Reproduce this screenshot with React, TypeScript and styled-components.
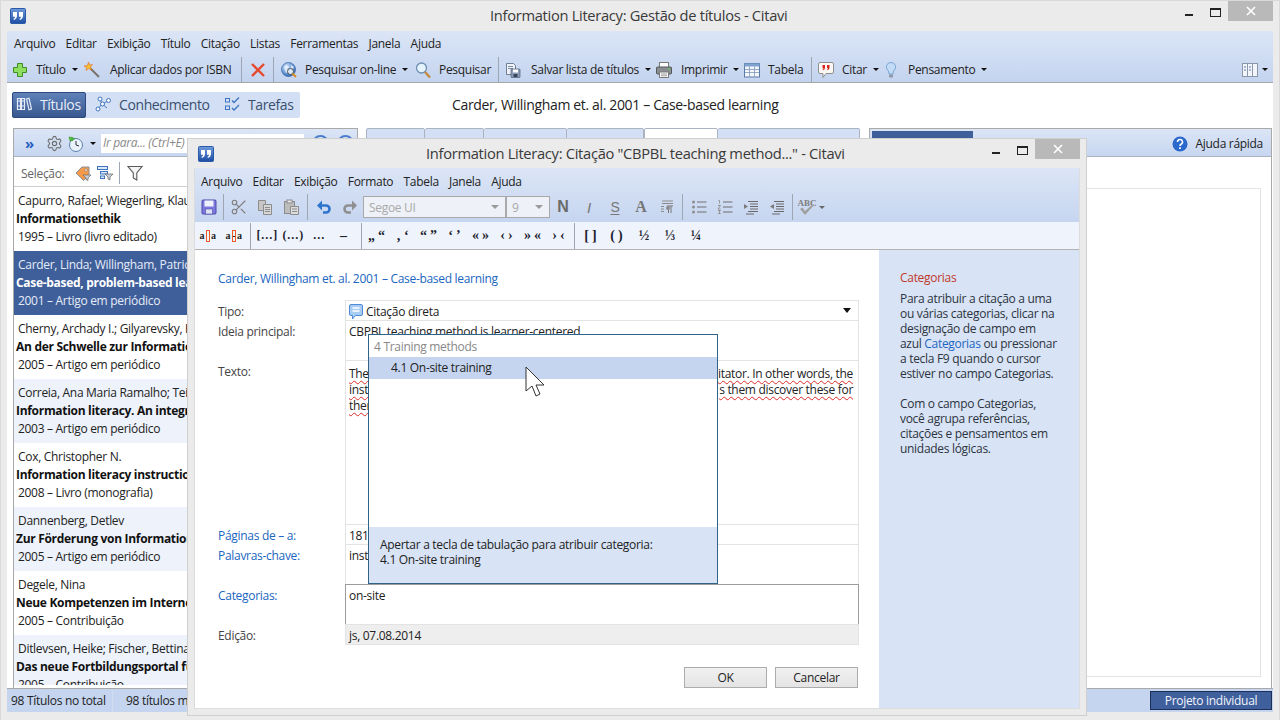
import React from 'react';
import styled, { createGlobalStyle } from 'styled-components';
import { Scissors, Settings } from 'lucide-react';

const UI_FONT = '"Open Sans", "Noto Sans", "Liberation Sans", sans-serif';
const SERIF = '"Liberation Serif", "DejaVu Serif", serif';

const Global = createGlobalStyle`
  html, body { margin: 0; padding: 0; width: 1280px; height: 720px; overflow: hidden; background: #ebebeb; }
  #root { width: 1280px; height: 720px; }
  * { box-sizing: border-box; }
  body { font-family: ${UI_FONT}; font-size: 12px; letter-spacing: -0.3px; color: #222; }
`;

/* window chrome */

const Win = styled.div`
  position: relative;
  width: 1280px;
  height: 720px;
  display: flex;
  flex-direction: column;
  background: #ebebeb;
  border: 1px solid #d9d9d9;
  border-bottom: 0;
`;

const TitleBar = styled.div<{ $h: number }>`
  flex: none;
  height: ${(p) => p.$h}px;
  display: flex;
  align-items: flex-start;
  position: relative;
`;

const TitleText = styled.div<{ $left: number; $top: number }>`
  margin-left: ${(p) => p.$left}px;
  margin-top: ${(p) => p.$top}px;
  font-size: 14.7px;
  line-height: 22px;
  color: #3a3a3a;
  white-space: nowrap;
`;

const LogoSlot = styled.div<{ $left: number; $top: number }>`
  flex: none;
  width: 16px;
  height: 16px;
  margin-left: ${(p) => p.$left}px;
  margin-top: ${(p) => p.$top}px;
`;

const Controls = styled.div<{ $right: number }>`
  position: absolute;
  top: 0;
  right: ${(p) => p.$right}px;
  display: flex;
  align-items: flex-start;
`;

const MinBtn = styled.div`
  width: 8px;
  height: 2px;
  margin-top: 13px;
  background: #222;
`;

const MaxBtn = styled.div`
  width: 11px;
  height: 9px;
  margin: 7px 7px 0 17px;
  border: 1px solid #222;
  border-top-width: 2px;
`;

const CloseBtn = styled.div`
  width: 45px;
  height: 20px;
  margin-left: 0;
  background: #b9b9b9;
  color: #fff;
  display: flex;
  align-items: center;
  justify-content: center;
`;

/* toolbars */

const Frame = styled.div`
  flex: none;
  height: 681px;
  margin: 0 6px 0 6px;
  display: flex;
  flex-direction: column;
`;

const BarGroup = styled.div`
  flex: none;
  height: 52px;
  background: linear-gradient(#dbe5f6, #c4d4ef);
  border-bottom: 1px solid #a8a8a8;
`;

const MenuBar = styled.div<{ $pad: number; $gap: number; $top?: number }>`
  height: 24px;
  display: flex;
  align-items: center;
  gap: ${(p) => p.$gap}px;
  padding-left: ${(p) => p.$pad}px;
  padding-top: ${(p) => p.$top ?? 0}px;
  color: #222;
`;

const ToolRow = styled.div`
  height: 27px;
  display: flex;
  align-items: center;
  padding: 2px 0 0 5px;
`;

const Tool = styled.div<{ $w: number; $offset: number }>`
  flex: none;
  width: ${(p) => p.$w}px;
  display: flex;
  align-items: center;
  white-space: nowrap;
  & > svg { flex: none; margin-right: ${(p) => p.$offset - 16}px; }
`;

const Caret = styled.span<{ $gray?: boolean }>`
  flex: none;
  width: 0;
  height: 0;
  margin-left: 6px;
  border-left: 3px solid transparent;
  border-right: 3px solid transparent;
  border-top: 3px solid ${(p) => (p.$gray ? '#666' : '#111')};
`;

const SpellCaret = styled(Caret)`
  margin-left: -1px;
`;

const Sep = styled.div<{ $l?: number; $r?: number; $h?: number }>`
  flex: none;
  width: 1px;
  height: ${(p) => p.$h ?? 26}px;
  margin-left: ${(p) => p.$l ?? 0}px;
  margin-right: ${(p) => p.$r ?? 7}px;
  background: #9ea6b3;
`;

const ToolEnd = styled.div`
  margin-left: auto;
  margin-right: 5px;
  display: flex;
  align-items: center;
  & > span { margin-left: 4px; }
`;

/* main window body */

const Body = styled.div`
  flex: 1;
  min-height: 0;
  background: #fff;
  display: flex;
  flex-direction: column;
`;

const NavRow = styled.div`
  flex: none;
  height: 26px;
  margin: 9px 0 10px 5px;
  display: flex;
  align-items: center;
`;

const NavStrip = styled.div`
  width: 288px;
  height: 26px;
  background: #d2dff4;
  border-radius: 2px;
  display: flex;
  align-items: stretch;
`;

const NavItem = styled.div<{ $w: number; $active?: boolean }>`
  flex: none;
  width: ${(p) => p.$w}px;
  display: flex;
  align-items: center;
  gap: 8px;
  padding: 0 0 2px ${(p) => (p.$active ? 3 : 9)}px;
  font-size: 14px;
  letter-spacing: -0.4px;
  color: ${(p) => (p.$active ? '#e8eefa' : '#39506f')};
  border-radius: 2px;
  ${(p) => p.$active && 'background: linear-gradient(#5e81ba, #39588f); border: 1px solid #2c4a7e;'}
`;

const Caption = styled.div`
  margin: -2px 0 0 152px;
  font-size: 14px;
  letter-spacing: -0.35px;
  color: #222;
`;

const Panels = styled.div`
  flex: 1;
  min-height: 0;
  display: flex;
  padding-left: 6px;
`;

const LeftPanel = styled.div`
  flex: none;
  width: 345px;
  display: flex;
  flex-direction: column;
  border: 1px solid #a9a9a9;
  border-bottom: 0;
  padding-bottom: 3px;
  overflow: hidden;
`;

const PanelHead = styled.div`
  flex: none;
  height: 28px;
  padding-top: 2px;
  background: linear-gradient(#dbe5f6, #c7d6f0);
  border-bottom: 1px solid #a9b3c2;
  display: flex;
  align-items: center;
`;

const Chevron = styled.span`
  margin-left: 11px;
  width: 21px;
  font-size: 15px;
  line-height: 15px;
  color: #1f5fc0;
  font-weight: 700;
`;

const HeadGap = styled.span<{ $w: number }>`
  flex: none;
  width: ${(p) => p.$w}px;
`;

const GoInput = styled.div`
  width: 203px;
  height: 19px;
  margin-left: 5px;
  padding-left: 2px;
  line-height: 18px;
  background: #fff;
  font-style: italic;
  color: #8a8a8a;
`;

const RoundBtn = styled.div`
  width: 17px;
  height: 17px;
  margin-left: 8px;
  border: 2px solid #4a7ccc;
  border-radius: 50%;
  background: #eaf1fb;
`;

const SelectRow = styled.div`
  flex: none;
  height: 30px;
  display: flex;
  align-items: center;
  padding: 3px 0 0 7px;
  border-bottom: 1px solid #cfcfcf;
  color: #666;
  & > svg { flex: none; }
`;

const TitleList = styled.div`
  flex: 1;
  min-height: 0;
  overflow: hidden;
`;

const Row = styled.div<{ $tone: 'plain' | 'alt' | 'selected' }>`
  height: 64px;
  padding: 5px 0 0 2px;
  line-height: 18px;
  white-space: nowrap;
  overflow: hidden;
  background: ${(p) => (p.$tone === 'selected' ? '#3f5f9b' : p.$tone === 'alt' ? '#edf2fb' : '#fff')};
  color: ${(p) => (p.$tone === 'selected' ? '#e6ecf7' : '#222')};
  & > b { display: block; color: ${(p) => (p.$tone === 'selected' ? '#fff' : '#111')}; }
  & > span { display: block; padding-left: 2px; }
`;

const MidPanel = styled.div`
  flex: none;
  width: 494px;
  margin-left: 8px;
  display: flex;
  align-items: flex-start;
`;

const TabTop = styled.div<{ $w: number; $active?: boolean }>`
  flex: none;
  width: ${(p) => p.$w}px;
  height: 29px;
  border: 1px solid #a9b3c2;
  border-left-width: ${(p) => (p.$active ? 1 : 0)}px;
  border-radius: 2px 2px 0 0;
  background: ${(p) => (p.$active ? '#fff' : '#d2dff4')};
  &:first-child { border-left-width: 1px; }
`;

const RightPanel = styled.div`
  flex: none;
  width: 403px;
  margin-left: 9px;
  display: flex;
  flex-direction: column;
  border: 1px solid #a9a9a9;
  border-bottom: 0;
`;

const RightHead = styled(PanelHead)`
  position: relative;
  justify-content: flex-end;
  padding-right: 8px;
  gap: 8px;
`;

const BlueTab = styled.div`
  position: absolute;
  left: 2px;
  top: 2px;
  width: 101px;
  height: 24px;
  background: #3f5f9b;
`;

const InnerBox = styled.div`
  flex: 1;
  margin: 31px 10px 11px 10px;
  border: 1px solid #e4e4e4;
`;

const StatusBar = styled.div`
  flex: none;
  height: 24px;
  background: #c5d5f0;
  border-top: 1px solid #a9a9a9;
  display: flex;
  align-items: center;
  padding-left: 4px;
  white-space: nowrap;
`;

const StatusCell = styled.div<{ $w: number }>`
  flex: none;
  width: ${(p) => p.$w}px;
  height: 22px;
  line-height: 22px;
  margin-right: 13px;
  border-right: 1px solid #d2ddf1;
`;

const ProjectBtn = styled.div`
  flex: none;
  width: 122px;
  height: 19px;
  margin-left: auto;
  margin-right: 1px;
  background: #3f5f9d;
  border: 1px solid #1d2f57;
  color: #f2f5fb;
  line-height: 17px;
  text-align: center;
`;

/* dialog */

const Dialog = styled.div`
  position: absolute;
  left: 186px;
  top: 137px;
  width: 900px;
  height: 578px;
  background: #ebebeb;
  border: 1px solid #cfcfcf;
  display: flex;
  flex-direction: column;
`;

const DialogInner = styled.div`
  flex: 1;
  min-height: 0;
  margin: 0 6px 6px 6px;
  display: flex;
  flex-direction: column;
  border: 1px solid #dcdcdc;
  border-top: 0;
`;

const DialogBars = styled.div`
  flex: none;
  height: 54px;
  background: linear-gradient(#dbe5f6, #c6d5f0);
`;

const DialogTools = styled.div`
  height: 30px;
  display: flex;
  align-items: center;
  padding-left: 1px;
`;

const Cell = styled.div`
  flex: none;
  width: 26px;
  height: 24px;
  display: flex;
  align-items: center;
  justify-content: center;
`;

const SpellCell = styled(Cell)`
  flex-direction: column;
  & > svg { margin-top: -5px; }
`;

const SpellText = styled.span`
  font: 700 9px ${SERIF};
  letter-spacing: 0;
  line-height: 9px;
  color: #7d7d7d;
`;

const FontBox = styled.div<{ $w: number }>`
  flex: none;
  width: ${(p) => p.$w}px;
  height: 22px;
  display: flex;
  align-items: center;
  justify-content: space-between;
  padding: 0 6px 0 5px;
  background: #eef1f7;
  border: 1px solid #a9a9a9;
  color: #aaa;
`;

const FontCaret = styled.span`
  width: 0;
  height: 0;
  border-left: 4px solid transparent;
  border-right: 4px solid transparent;
  border-top: 4px solid #9a9a9a;
`;

const GlyphN = styled.span`
  font: 700 16px "Liberation Sans", sans-serif;
  color: #6b6b6b;
`;

const GlyphI = styled.span`
  font: italic 400 15px "Liberation Sans", sans-serif;
  color: #777;
`;

const GlyphS = styled.span`
  font: 400 14px "Liberation Sans", sans-serif;
  color: #777;
  text-decoration: underline;
  text-underline-offset: 2px;
`;

const GlyphA = styled.span`
  font: 700 16px ${SERIF};
  color: #777;
`;

const CharBar = styled.div`
  flex: none;
  height: 28px;
  background: #eff4fc;
  border-bottom: 1px solid #b3b3b3;
  display: flex;
  align-items: center;
`;

const CharCell = styled(Cell)`
  height: 26px;
  font: 700 12px ${SERIF};
  letter-spacing: 0.4px;
  color: #1c1c2e;
`;

const QuoteCell = styled(CharCell)`
  font-size: 14px;
  letter-spacing: 3px;
`;

const FractionCell = styled(CharCell)`
  font-size: 14px;
  letter-spacing: 0;
`;

const BreakGlyph = styled.span`
  display: inline-flex;
  align-items: center;
  font: 700 10px ${SERIF};
  color: #222;
`;

const BreakBox = styled.span<{ $dash?: boolean }>`
  display: inline-block;
  width: 4px;
  height: 12px;
  margin: 0 1px;
  border: 1px solid #ee5a24;
  background: ${(p) => (p.$dash ? 'linear-gradient(transparent 45%, #222 45%, #222 60%, transparent 60%)' : 'transparent')};
`;

const DialogMain = styled.div`
  flex: 1;
  min-height: 0;
  display: flex;
  background: #fff;
`;

const FormArea = styled.div`
  position: relative;
  flex: none;
  width: 684px;
  padding: 19px 0 0 23px;
`;

const QuoteLink = styled.div`
  height: 20px;
  line-height: 20px;
  margin-bottom: 12px;
  color: #1a66c0;
  white-space: nowrap;
`;

const FormGrid = styled.div`
  display: grid;
  grid-template-columns: 127px 514px;
  grid-template-rows: 20px 40px 164px 20px 40px 40px 20px;
`;

const FieldLabel = styled.div<{ $link?: boolean }>`
  padding-top: 1px;
  line-height: 19px;
  color: ${(p) => (p.$link ? '#1a66c0' : '#444')};
`;

const Field = styled.div<{ $dark?: boolean; $filled?: boolean }>`
  position: relative;
  display: flex;
  align-items: flex-start;
  border: 1px solid ${(p) => (p.$dark ? '#9c9c9c' : '#e3e3e3')};
  margin-top: -1px;
  padding: 1px 3px 0;
  line-height: 19px;
  white-space: nowrap;
  overflow: hidden;
  background: ${(p) => (p.$filled ? '#eeeeee' : '#fff')};
  color: #222;
`;

const TypeIcon = styled.span`
  display: inline-flex;
  margin-right: 3px;
  margin-top: 2px;
`;

const TypeArrow = styled.span`
  position: absolute;
  right: 7px;
  top: 7px;
  width: 0;
  height: 0;
  border-left: 4px solid transparent;
  border-right: 4px solid transparent;
  border-top: 5px solid #111;
`;

const QuoteText = styled.div`
  width: 100%;
  padding-top: 4px;
`;

const QuoteLine = styled.div`
  display: flex;
  justify-content: space-between;
  height: 16px;
  line-height: 16px;
  padding-right: 2px;
  & > span {
    text-decoration: underline wavy #d92c2c 1px;
    text-underline-offset: 2px;
  }
`;

const Popup = styled.div`
  position: absolute;
  left: 173px;
  top: 84px;
  width: 350px;
  height: 250px;
  background: #fff;
  border: 1px solid #2f6488;
  display: flex;
  flex-direction: column;
`;

const PopupHead = styled.div`
  flex: none;
  height: 22px;
  line-height: 24px;
  padding-left: 5px;
  color: #888;
`;

const PopupRow = styled.div`
  flex: none;
  height: 22px;
  line-height: 22px;
  padding-left: 22px;
  background: #c5d5f0;
`;

const PopupHint = styled.div`
  flex: none;
  height: 56px;
  margin-top: auto;
  padding: 10px 0 0 11px;
  line-height: 15px;
  background: #d8e3f5;
  white-space: nowrap;
`;

const Pointer = styled.svg`
  position: absolute;
  left: 330px;
  top: 116px;
`;

const FormButtons = styled.div`
  display: flex;
  justify-content: flex-end;
  gap: 8px;
  margin-top: 22px;
  padding-right: 1px;
  width: 641px;
`;

const PushButton = styled.div`
  width: 83px;
  height: 21px;
  line-height: 19px;
  text-align: center;
  background: linear-gradient(#f1f1f1, #e4e4e4);
  border: 1px solid #acacac;
  color: #222;
`;

const HelpSide = styled.div`
  flex: 1;
  padding: 20px 0 0 21px;
  background: #d8e3f5;
  line-height: 15px;
  white-space: nowrap;
  color: #2c3440;
`;

const HelpTitle = styled.div`
  margin-bottom: 6px;
  color: #c0392b;
`;

const HelpLink = styled.span`
  color: #1a66c0;
`;

const HelpPara = styled.p`
  margin: 0 0 15px;
`;

/* icons */

const Ico = ({ children, s = 16 }: { children: React.ReactNode; s?: number }) => (
  <svg width={s} height={s} viewBox="0 0 16 16" fill="none">
    {children}
  </svg>
);

const Logo = () => (
  <Ico>
    <defs>
      <linearGradient id="lg" x1="0" y1="0" x2="0" y2="1">
        <stop offset="0" stopColor="#6f9bdb" />
        <stop offset="1" stopColor="#1c4da3" />
      </linearGradient>
    </defs>
    <rect x="0.5" y="0.5" width="15" height="15" rx="1" fill="url(#lg)" stroke="#2b5aa8" />
    <path d="M3 4h4v3.500c0 2-1 3.600-3 4.500l-.6-1c1-.6 1.600-1.300 1.700-2.200H3zM9 4h4v3.500c0 2-1 3.600-3 4.500l-.6-1c1-.6 1.600-1.300 1.700-2.200H9z" fill="#fff" />
  </Ico>
);

const PlusIcon = () => (
  <Ico>
    <path d="M5.500 1.500h5v4h4v5h-4v4h-5v-4h-4v-5h4z" fill="#8ede62" stroke="#3d8f22" />
  </Ico>
);

const WandIcon = () => (
  <Ico>
    <path d="M6 6l9 9" stroke="#77736b" strokeWidth="2" />
    <path d="M4.500 0l1 3 3-.5-2 2.500 1 3-3-1.500-2.500 2 .5-3L0 4l3.500-.5z" fill="#f6c22f" stroke="#e0692a" strokeWidth=".6" />
  </Ico>
);

const RedX = () => (
  <Ico>
    <path d="M2 2l12 12M14 2L2 14" stroke="#e6492d" strokeWidth="2.400" />
  </Ico>
);

const GlobeIcon = () => (
  <Ico>
    <defs>
      <radialGradient id="gb" cx=".35" cy=".3" r=".8">
        <stop offset="0" stopColor="#cfe4fb" />
        <stop offset="1" stopColor="#1f5fb5" />
      </radialGradient>
    </defs>
    <circle cx="7.500" cy="7.500" r="7" fill="url(#gb)" stroke="#2f5f9f" strokeWidth=".7" />
    <path d="M3 5l3-2 2 2-2 2 1 3-2 1zM10 3l3 2-1 2-2-1z" fill="#e6f1fc" opacity=".85" />
    <circle cx="9.500" cy="9.500" r="3" fill="#dbeafa" stroke="#555" />
    <path d="M11.500 11.500L15 15" stroke="#d98b20" strokeWidth="2" />
  </Ico>
);

const LensIcon = () => (
  <Ico>
    <circle cx="6.500" cy="6" r="5" fill="#e5f3fd" stroke="#6d90b3" strokeWidth="1.300" />
    <path d="M10 10l5 5.500" stroke="#c58a3e" strokeWidth="2.400" />
  </Ico>
);

const SaveListIcon = () => (
  <Ico>
    <path d="M1.500 1.500h7l2 2v9h-9z" fill="#eef2f8" stroke="#6d7f96" />
    <path d="M3 4.500h5M3 6.500h5" stroke="#7e8ea3" />
    <rect x="6" y="7" width="9" height="8.500" rx=".6" fill="#8d9cb5" stroke="#4f5f7a" strokeWidth=".7" />
    <rect x="8" y="7.500" width="5" height="3" fill="#fff" />
    <rect x="8.500" y="12" width="4" height="3" fill="#39465e" />
  </Ico>
);

const PrinterIcon = () => (
  <Ico>
    <rect x="3.500" y="0.500" width="9" height="5" fill="#fff" stroke="#7a7a7a" />
    <rect x="0.500" y="5" width="15" height="7" rx="1" fill="#8a8d92" stroke="#55585c" />
    <rect x="12" y="6.500" width="2" height="1.200" fill="#63d34a" />
    <rect x="3.500" y="10" width="9" height="5.500" fill="#fff" stroke="#7a7a7a" />
    <path d="M5 12h6M5 13.800h6" stroke="#9a9a9a" />
  </Ico>
);

const TableIcon = () => (
  <Ico>
    <rect x="0.500" y="1.500" width="15" height="13.500" fill="#f3f7fc" stroke="#5a7ba5" />
    <rect x="0.500" y="1.500" width="15" height="3" fill="#7fa2cf" />
    <path d="M5.500 4.500v10M10.500 4.500v10M1 7.500h14M1 10.500h14" stroke="#7f98b8" strokeWidth=".8" />
  </Ico>
);

const CiteIcon = () => (
  <Ico>
    <path d="M2 .5h12a1.500 1.500 0 0 1 1.500 1.500v8a1.500 1.500 0 0 1-1.500 1.500H8l-3 4v-4H2A1.500 1.500 0 0 1 .5 10V2A1.500 1.500 0 0 1 2 .5z" fill="#fbf7f4" stroke="#8f8f8f" />
    <path d="M4.500 3h2.500v2.500c0 1.300-.7 2.200-2 2.800l-.4-.8c.6-.4 1-.8 1-1.300H4.500zM9 3h2.500v2.500c0 1.300-.7 2.200-2 2.800l-.4-.8c.6-.4 1-.8 1-1.300H9z" fill="#d8261c" />
  </Ico>
);

const BulbIcon = () => (
  <Ico>
    <path d="M5 .5a4.500 4.500 0 0 1 3 8c-.7.700-1 2-1 3.500H3c0-1.500-.3-2.800-1-3.500a4.500 4.500 0 0 1 3-8z" fill="#c2dcf7" stroke="#7aa5d6" />
    <rect x="3" y="12.500" width="4" height="3" rx=".8" fill="#8d98a8" />
  </Ico>
);

const ColumnsIcon = () => (
  <Ico>
    <rect x="0.500" y="1.500" width="15" height="13" fill="#f2f5fa" stroke="#8b97a8" />
    <path d="M5.500 2v12M10.500 2v12" stroke="#8b97a8" />
    <path d="M2 5h2M2 8h2M7 5h2M7 8h2" stroke="#5b7cab" />
  </Ico>
);

const BooksIcon = () => (
  <Ico>
    <path d="M1.500 2.500h3v11h-3zM5.500 2.500h3v11h-3z" fill="none" stroke="#e6edf9" strokeWidth="1.200" />
    <path d="M10.500 3l2.500-.8L15.500 13l-2.500.8z" fill="none" stroke="#e6edf9" strokeWidth="1.200" />
    <path d="M2 5h2M6 5h2M2 10h2M6 10h2" stroke="#e6edf9" />
  </Ico>
);

const NodesIcon = () => (
  <Ico>
    <path d="M3 13L7 8l6-3M7 8L5 3M7 8l5 4" stroke="#4d7fc6" />
    <circle cx="3" cy="13" r="2" fill="#fff" stroke="#3f74c0" />
    <circle cx="7.500" cy="8" r="2" fill="#fff" stroke="#3f74c0" />
    <circle cx="5" cy="3" r="2" fill="#fff" stroke="#3f74c0" />
    <circle cx="13.500" cy="4.500" r="2" fill="#fff" stroke="#3f74c0" />
  </Ico>
);

const TasksIcon = () => (
  <Ico>
    <rect x="1.500" y="2.500" width="4" height="3.500" stroke="#3f74c0" />
    <rect x="1.500" y="10" width="4" height="3.500" stroke="#3f74c0" />
    <path d="M8 4.500l2 2 5-5M8 12l2 2 5-5" stroke="#3f74c0" strokeWidth="1.300" />
  </Ico>
);

const ClockIcon = () => (
  <Ico>
    <circle cx="8" cy="9" r="6.500" fill="#eaf2fb" stroke="#5d7fae" />
    <path d="M8 5v4l3 1" stroke="#334" />
    <path d="M1 1l4 .5-1 1.500c1-.5 2-.6 3-.6L4 5l-.6-1-1.200 1.500z" fill="#4fbf3d" stroke="#2b8b1d" strokeWidth=".5" />
  </Ico>
);

const TagIcon = () => (
  <Ico>
    <path d="M1 8l6-6h7v8l-5.500 5.500z" fill="#f59a4a" stroke="#8a8f98" />
    <circle cx="11" cy="5" r="1.200" fill="#fff" stroke="#777" strokeWidth=".6" />
    <path d="M8 10h8l-3 3v2.500l-2-1V13z" fill="#c9ced6" stroke="#666" strokeWidth=".7" />
  </Ico>
);

const ListFilterIcon = () => (
  <Ico>
    <rect x="0.500" y="1.500" width="10" height="3" fill="#dbe8f8" stroke="#3f74c0" />
    <rect x="3.500" y="6.500" width="7" height="2.500" fill="#dbe8f8" stroke="#3f74c0" />
    <rect x="3.500" y="11" width="4" height="2.500" fill="#dbe8f8" stroke="#3f74c0" />
    <path d="M8 9h8l-3 3v3l-2-1v-2z" fill="#c9ced6" stroke="#666" strokeWidth=".7" />
  </Ico>
);

const FunnelIcon = () => (
  <Ico>
    <path d="M1 1.500h14L9.800 8v7l-3.500-2V8z" fill="#f5f5f5" stroke="#5a5a5a" strokeWidth="1.100" />
  </Ico>
);

const HelpIcon = () => (
  <svg width="16" height="16" viewBox="0 0 16 16">
    <circle cx="8" cy="8" r="7.500" fill="#2a68cc" />
    <path d="M5.500 6a2.500 2.500 0 1 1 3.500 2.300c-.7.400-1 .8-1 1.700" stroke="#fff" strokeWidth="1.600" fill="none" />
    <rect x="7.100" y="11.200" width="1.800" height="1.800" fill="#fff" />
  </svg>
);

const CloseX = () => (
  <svg width="10" height="10" viewBox="0 0 10 10">
    <path d="M1 1l8 8M9 1L1 9" stroke="#fff" strokeWidth="1.600" />
  </svg>
);

const FloppyIcon = () => (
  <Ico>
    <rect x="1" y="1" width="14" height="14" rx="1" fill="#7d78de" stroke="#4a4aa8" />
    <rect x="3.500" y="1.500" width="9" height="6" fill="#eef1fb" />
    <rect x="4.500" y="10" width="7" height="5" fill="#dfe2f4" stroke="#4a4aa8" strokeWidth=".6" />
  </Ico>
);

const CopyIcon = () => (
  <Ico>
    <path d="M1.500 1.500h7v10h-7z" fill="#c6c6c6" stroke="#8c8c8c" />
    <path d="M6.500 5.500h8v10h-8z" fill="#d6d6d6" stroke="#8c8c8c" />
    <path d="M8 8.500h5M8 10.500h5M8 12.500h5" stroke="#8c8c8c" />
  </Ico>
);

const PasteIcon = () => (
  <Ico>
    <rect x="1.500" y="2.500" width="10" height="12" fill="#bdbdbd" stroke="#8c8c8c" />
    <rect x="4" y="1" width="5" height="3" fill="#e5e5e5" stroke="#8c8c8c" />
    <path d="M7.500 7.500h8v8h-8z" fill="#dcdcdc" stroke="#8c8c8c" />
    <path d="M9 10h5M9 12.500h5" stroke="#8c8c8c" />
  </Ico>
);

const UndoIcon = ({ color }: { color: string }) => (
  <Ico>
    <path d="M4.500 6.500H10a3.500 3.500 0 0 1 0 7H7" stroke={color} strokeWidth="2.600" />
    <path d="M6 1.500L1 6.500l5 5z" fill={color} />
  </Ico>
);

const RedoIcon = ({ color }: { color: string }) => (
  <Ico>
    <path d="M11.500 6.500H6a3.500 3.500 0 0 0 0 7h3" stroke={color} strokeWidth="2.600" />
    <path d="M10 1.500l5 5-5 5z" fill={color} />
  </Ico>
);

const ParaIcon = () => (
  <Ico>
    <path d="M3 2h11M3 4.500h11M2 7.500h3M2 10h3M2 12.500h3" stroke="#8c8c8c" />
    <path d="M8 7h6M9.500 7v7M12 7v7" stroke="#777" />
    <circle cx="9" cy="9" r="2" fill="#8c8c8c" />
  </Ico>
);

const BulletsIcon = () => (
  <Ico>
    <circle cx="2.500" cy="3" r="1.500" fill="#8d8d8d" />
    <circle cx="2.500" cy="8" r="1.500" fill="#8d8d8d" />
    <circle cx="2.500" cy="13" r="1.500" fill="#8d8d8d" />
    <path d="M6 3h9.500M6 8h9.500M6 13h9.500" stroke="#6f6f6f" />
  </Ico>
);

const NumbersIcon = () => (
  <Ico>
    <path d="M1.500 1.500h1v3M1 6.500h2.500L1 10h2.500M1 11.500h2.500l-1.500 1.500 1.500 1.500H1" stroke="#8d8d8d" strokeWidth=".9" />
    <path d="M6 3h9.500M6 8h9.500M6 13h9.500" stroke="#6f6f6f" />
  </Ico>
);

const IndentIcon = ({ back }: { back?: boolean }) => (
  <Ico>
    <path d="M5 2.500h10M7 5h8M7 7.500h8M7 10h8M5 12.500h10M3 15h8" stroke="#6a6a6a" />
    <path d={back ? 'M1 7.500L5 5v5z' : 'M5 7.500L1 5v5z'} fill="#7c7c7c" />
  </Ico>
);

const SpellCheck = () => (
  <svg width="16" height="12" viewBox="0 0 16 12">
    <path d="M1 6l2.500-1.500L6 8 14 1l1 1.200L6 12z" fill="#a0a0a0" />
  </svg>
);

const Bubble = () => (
  <svg width="14" height="16" viewBox="0 0 14 16">
    <path d="M2 .5h10A1.500 1.500 0 0 1 13.500 2v8a1.500 1.500 0 0 1-1.500 1.500H6.500L3.500 15v-3.500H2A1.500 1.500 0 0 1 .5 10V2A1.500 1.500 0 0 1 2 .5z" fill="#a9ccf4" stroke="#4d8ad8" />
    <path d="M3.500 4h7M3.500 7h7" stroke="#fff" strokeWidth="1.300" />
  </svg>
);

/* data */

const titles: { a: string; t: string; y: string; tone: 'plain' | 'alt' | 'selected' }[] = [
  { a: 'Capurro, Rafael; Wiegerling, Klaus', t: 'Informationsethik', y: '1995 – Livro (livro editado)', tone: 'plain' },
  { a: 'Carder, Linda; Willingham, Patricia', t: 'Case-based, problem-based learning', y: '2001 – Artigo em periódico', tone: 'selected' },
  { a: 'Cherny, Archady I.; Gilyarevsky, R.', t: 'An der Schwelle zur Informationsgesellschaft', y: '2005 – Artigo em periódico', tone: 'plain' },
  { a: 'Correia, Ana Maria Ramalho; Teixeira', t: 'Information literacy. An integrated concept', y: '2003 – Artigo em periódico', tone: 'alt' },
  { a: 'Cox, Christopher N.', t: 'Information literacy instruction', y: '2008 – Livro (monografia)', tone: 'plain' },
  { a: 'Dannenberg, Detlev', t: 'Zur Förderung von Informationskompetenz', y: '2005 – Artigo em periódico', tone: 'alt' },
  { a: 'Degele, Nina', t: 'Neue Kompetenzen im Internet', y: '2005 – Contribuição', tone: 'plain' },
  { a: 'Ditlevsen, Heike; Fischer, Bettina', t: 'Das neue Fortbildungsportal für', y: '2005 – Contribuição', tone: 'alt' },
];

const mainMenu = ['Arquivo', 'Editar', 'Exibição', 'Título', 'Citação', 'Listas', 'Ferramentas', 'Janela', 'Ajuda'];
const dialogMenu = ['Arquivo', 'Editar', 'Exibição', 'Formato', 'Tabela', 'Janela', 'Ajuda'];
const quoteGlyphs = ['„“', '‚‘', '“”', '‘’', '«»', '‹›', '»«', '›‹'];

export default function App() {
  return (
    <>
      <Global />
      <Win>
        <TitleBar $h={30}>
          <LogoSlot $left={9} $top={7}>
            <Logo />
          </LogoSlot>
          <TitleText $left={464} $top={3}>
            Information Literacy: Gestão de títulos - Citavi
          </TitleText>
          <Controls $right={6}>
            <MinBtn />
            <MaxBtn />
            <CloseBtn>
              <CloseX />
            </CloseBtn>
          </Controls>
        </TitleBar>

        <Frame>
          <BarGroup>
            <MenuBar $pad={7} $gap={10.25}>
              {mainMenu.map((m) => (
                <span key={m}>{m}</span>
              ))}
            </MenuBar>
            <ToolRow>
              <Tool $w={72} $offset={24}>
                <PlusIcon />
                Título
                <Caret />
              </Tool>
              <Tool $w={157} $offset={26}>
                <WandIcon />
                Aplicar dados por ISBN
              </Tool>
              <Sep $r={8} />
              <Tool $w={23} $offset={16}>
                <RedX />
              </Tool>
              <Sep />
              <Tool $w={134} $offset={24}>
                <GlobeIcon />
                Pesquisar on-line
                <Caret />
              </Tool>
              <Tool $w={83} $offset={24}>
                <LensIcon />
                Pesquisar
              </Tool>
              <Sep $r={6} />
              <Tool $w={151} $offset={26}>
                <SaveListIcon />
                Salvar lista de títulos
                <Caret />
              </Tool>
              <Tool $w={88} $offset={25}>
                <PrinterIcon />
                Imprimir
                <Caret />
              </Tool>
              <Tool $w={67} $offset={24}>
                <TableIcon />
                Tabela
              </Tool>
              <Sep $r={6} />
              <Tool $w={68} $offset={24}>
                <CiteIcon />
                Citar
                <Caret />
              </Tool>
              <Tool $w={110} $offset={22}>
                <BulbIcon />
                Pensamento
                <Caret />
              </Tool>
              <ToolEnd>
                <ColumnsIcon />
                <Caret />
              </ToolEnd>
            </ToolRow>
          </BarGroup>

          <Body>
            <NavRow>
              <NavStrip>
                <NavItem $w={74} $active>
                  <BooksIcon />
                  Títulos
                </NavItem>
                <NavItem $w={129}>
                  <NodesIcon />
                  Conhecimento
                </NavItem>
                <NavItem $w={85}>
                  <TasksIcon />
                  Tarefas
                </NavItem>
              </NavStrip>
              <Caption>Carder, Willingham et. al. 2001 – Case-based learning</Caption>
            </NavRow>

            <Panels>
              <LeftPanel>
                <PanelHead>
                  <Chevron>»</Chevron>
                  <Settings size={17} color="#6f6f6f" strokeWidth={1.6} />
                  <HeadGap $w={5} />
                  <ClockIcon />
                  <Caret />
                  <GoInput>Ir para... (Ctrl+E)</GoInput>
                  <RoundBtn />
                  <RoundBtn />
                </PanelHead>
                <SelectRow>
                  Seleção:
                  <HeadGap $w={11} />
                  <TagIcon />
                  <HeadGap $w={6} />
                  <ListFilterIcon />
                  <HeadGap $w={6} />
                  <Sep $r={7} $h={22} />
                  <FunnelIcon />
                </SelectRow>
                <TitleList>
                  {titles.map((r) => (
                    <Row key={r.a} $tone={r.tone}>
                      <span>{r.a}</span>
                      <b>{r.t}</b>
                      <span>{r.y}</span>
                    </Row>
                  ))}
                </TitleList>
              </LeftPanel>

              <MidPanel>
                <TabTop $w={59} />
                <TabTop $w={59} />
                <TabTop $w={83} />
                <TabTop $w={77} />
                <TabTop $w={74} $active />
                <TabTop $w={142} />
              </MidPanel>

              <RightPanel>
                <RightHead>
                  <BlueTab />
                  <HelpIcon />
                  Ajuda rápida
                </RightHead>
                <InnerBox />
              </RightPanel>
            </Panels>

            <StatusBar>
              <StatusCell $w={102}>98 Títulos no total</StatusCell>
              98 títulos mostrados
              <ProjectBtn>Projeto individual</ProjectBtn>
            </StatusBar>
          </Body>
        </Frame>

        <Dialog>
          <TitleBar $h={29}>
            <LogoSlot $left={10} $top={7}>
              <Logo />
            </LogoSlot>
            <TitleText $left={212} $top={3}>
              Information Literacy: Citação "CBPBL teaching method..." - Citavi
            </TitleText>
            <Controls $right={6}>
              <MinBtn />
              <MaxBtn />
              <CloseBtn>
                <CloseX />
              </CloseBtn>
            </Controls>
          </TitleBar>

          <DialogInner>
            <DialogBars>
              <MenuBar $pad={6} $gap={10.25} $top={2}>
                {dialogMenu.map((m) => (
                  <span key={m}>{m}</span>
                ))}
              </MenuBar>
              <DialogTools>
                <Cell>
                  <FloppyIcon />
                </Cell>
                <Sep $l={1} $r={2} />
                <Cell>
                  <Scissors size={18} color="#7d7d7d" strokeWidth={1.5} />
                </Cell>
                <Cell>
                  <CopyIcon />
                </Cell>
                <Cell>
                  <PasteIcon />
                </Cell>
                <Sep $l={3} $r={3} />
                <Cell>
                  <UndoIcon color="#2f74cc" />
                </Cell>
                <Cell>
                  <RedoIcon color="#8f8f8f" />
                </Cell>
                <FontBox $w={143}>
                  Segoe UI
                  <FontCaret />
                </FontBox>
                <FontBox $w={44}>
                  9
                  <FontCaret />
                </FontBox>
                <Cell>
                  <GlyphN>N</GlyphN>
                </Cell>
                <Cell>
                  <GlyphI>I</GlyphI>
                </Cell>
                <Cell>
                  <GlyphS>S</GlyphS>
                </Cell>
                <Cell>
                  <GlyphA>A</GlyphA>
                </Cell>
                <Cell>
                  <ParaIcon />
                </Cell>
                <Sep $l={2} $r={3} />
                <Cell>
                  <BulletsIcon />
                </Cell>
                <Cell>
                  <NumbersIcon />
                </Cell>
                <Cell>
                  <IndentIcon />
                </Cell>
                <Cell>
                  <IndentIcon back />
                </Cell>
                <Sep $l={2} $r={1} />
                <SpellCell>
                  <SpellText>ABC</SpellText>
                  <SpellCheck />
                </SpellCell>
                <SpellCaret $gray />
              </DialogTools>
            </DialogBars>

            <CharBar>
              <CharCell>
                <BreakGlyph>
                  a<BreakBox />a
                </BreakGlyph>
              </CharCell>
              <CharCell>
                <BreakGlyph>
                  a<BreakBox $dash />a
                </BreakGlyph>
              </CharCell>
              <Sep $l={3} $r={3} />
              <CharCell>[…]</CharCell>
              <CharCell>(…)</CharCell>
              <CharCell>…</CharCell>
              <QuoteCell>–</QuoteCell>
              <Sep $l={3} $r={3} />
              {quoteGlyphs.map((q) => (
                <QuoteCell key={q}>{q}</QuoteCell>
              ))}
              <Sep $l={1} $r={4} />
              <QuoteCell>[]</QuoteCell>
              <QuoteCell>()</QuoteCell>
              <FractionCell>½</FractionCell>
              <FractionCell>⅓</FractionCell>
              <FractionCell>¼</FractionCell>
            </CharBar>

            <DialogMain>
              <FormArea>
                <QuoteLink>Carder, Willingham et. al. 2001 – Case-based learning</QuoteLink>
                <FormGrid>
                  <FieldLabel>Tipo:</FieldLabel>
                  <Field>
                    <TypeIcon>
                      <Bubble />
                    </TypeIcon>
                    Citação direta
                    <TypeArrow />
                  </Field>
                  <FieldLabel>Ideia principal:</FieldLabel>
                  <Field>CBPBL teaching method is learner-centered</Field>
                  <FieldLabel>Texto:</FieldLabel>
                  <Field>
                    <QuoteText>
                      <QuoteLine>
                        <span>The</span>
                        <span>itator. In other words, the</span>
                      </QuoteLine>
                      <QuoteLine>
                        <span>inst</span>
                        <span>s them discover these for</span>
                      </QuoteLine>
                      <QuoteLine>
                        <span>them</span>
                      </QuoteLine>
                    </QuoteText>
                  </Field>
                  <FieldLabel $link>Páginas de – a:</FieldLabel>
                  <Field>181</Field>
                  <FieldLabel $link>Palavras-chave:</FieldLabel>
                  <Field>inst</Field>
                  <FieldLabel $link>Categorias:</FieldLabel>
                  <Field $dark>on-site</Field>
                  <FieldLabel>Edição:</FieldLabel>
                  <Field $filled>js, 07.08.2014</Field>
                </FormGrid>
                <FormButtons>
                  <PushButton>OK</PushButton>
                  <PushButton>Cancelar</PushButton>
                </FormButtons>

                <Popup>
                  <PopupHead>4 Training methods</PopupHead>
                  <PopupRow>4.1 On-site training</PopupRow>
                  <PopupHint>
                    Apertar a tecla de tabulação para atribuir categoria:
                    <br />
                    4.1 On-site training
                  </PopupHint>
                </Popup>
                <Pointer width="21" height="32" viewBox="0 0 21 32">
                  <path d="M1 1v24l6-5 4 10 4-2-4-9h8z" fill="#fff" stroke="#333" strokeWidth="1" />
                </Pointer>
              </FormArea>
              <HelpSide>
                <HelpTitle>Categorias</HelpTitle>
                <HelpPara>
                  Para atribuir a citação a uma
                  <br />
                  ou várias categorias, clicar na
                  <br />
                  designação de campo em
                  <br />
                  azul <HelpLink>Categorias</HelpLink> ou pressionar
                  <br />
                  a tecla F9 quando o cursor
                  <br />
                  estiver no campo Categorias.
                </HelpPara>
                <HelpPara>
                  Com o campo Categorias,
                  <br />
                  você agrupa referências,
                  <br />
                  citações e pensamentos em
                  <br />
                  unidades lógicas.
                </HelpPara>
              </HelpSide>
            </DialogMain>
          </DialogInner>
        </Dialog>
      </Win>
    </>
  );
}
